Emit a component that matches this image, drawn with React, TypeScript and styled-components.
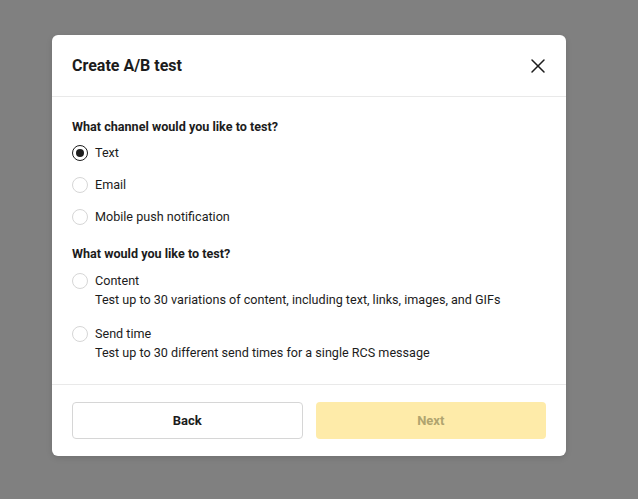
import styled, { createGlobalStyle } from "styled-components";
import { X } from "lucide-react";

const GlobalStyle = createGlobalStyle`
  html, body {
    margin: 0;
    padding: 0;
    background: #808080;
  }
  body {
    font-family: Roboto, "Liberation Sans", Arial, sans-serif;
    color: #1c1c1c;
    -webkit-font-smoothing: antialiased;
  }
`;

const channels = [
  { id: "text", label: "Text" },
  { id: "email", label: "Email" },
  { id: "push", label: "Mobile push notification" },
];

const tests = [
  {
    id: "content",
    label: "Content",
    description: "Test up to 30 variations of content, including text, links, images, and GIFs",
  },
  {
    id: "send",
    label: "Send time",
    description: "Test up to 30 different send times for a single RCS message",
  },
];

function App() {
  return (
    <>
      <GlobalStyle />
      <Overlay>
        <Modal>
          <Header>
            <Title>Create A/B test</Title>
            <CloseButton aria-label="Close">
              <X size={24} strokeWidth={1.5} color="#1c1c1c" />
            </CloseButton>
          </Header>
          <Body>
            <Heading>What channel would you like to test?</Heading>
            {channels.map((c) => (
              <RadioRow key={c.id}>
                <Radio $checked={c.id === "text"} />
                <Label>{c.label}</Label>
              </RadioRow>
            ))}
            <Heading $spaced>What would you like to test?</Heading>
            {tests.map((t) => (
              <OptionBlock key={t.id}>
                <OptionTop>
                  <Radio />
                  <Label>{t.label}</Label>
                </OptionTop>
                <Description>{t.description}</Description>
              </OptionBlock>
            ))}
          </Body>
          <Footer>
            <BackButton>Back</BackButton>
            <NextButton disabled>Next</NextButton>
          </Footer>
        </Modal>
      </Overlay>
    </>
  );
}

const Overlay = styled.div`
  height: 499px;
  padding: 35px 0 0 52px;
  box-sizing: border-box;
`;

const Modal = styled.div`
  width: 514px;
  background: #ffffff;
  border-radius: 6px;
  box-shadow: 0 2px 6px rgba(0, 0, 0, 0.12);
  overflow: hidden;
`;

const Header = styled.div`
  display: flex;
  align-items: center;
  justify-content: space-between;
  height: 61px;
  padding: 0 16px 0 20px;
  border-bottom: 1px solid #e9e9e9;
`;

const Title = styled.h2`
  margin: 0;
  font-size: 16px;
  font-weight: 700;
`;

const CloseButton = styled.button`
  display: flex;
  align-items: center;
  justify-content: center;
  width: 24px;
  height: 24px;
  padding: 0;
  border: none;
  background: none;
  cursor: pointer;
`;

const Body = styled.div`
  padding: 20px 20px 14px;
`;

const Heading = styled.h3<{ $spaced?: boolean }>`
  margin: ${(p) => (p.$spaced ? "11px" : "0")} 0 0;
  font-size: 12.6px;
  line-height: 20px;
  font-weight: 700;
`;

const RadioRow = styled.div`
  display: flex;
  align-items: center;
  gap: 7px;
  height: 32px;
`;

const Radio = styled.span<{ $checked?: boolean }>`
  position: relative;
  flex: none;
  width: 16px;
  height: 16px;
  box-sizing: border-box;
  border-radius: 50%;
  border: ${(p) => (p.$checked ? "1.5px solid #1c1c1c" : "1px solid #d6d6d6")};
  background: #fff;

  &::after {
    content: "";
    display: ${(p) => (p.$checked ? "block" : "none")};
    position: absolute;
    top: 50%;
    left: 50%;
    width: 8px;
    height: 8px;
    margin: -4px 0 0 -4px;
    border-radius: 50%;
    background: #1c1c1c;
  }
`;

const Label = styled.span`
  font-size: 12.6px;
  line-height: 18px;
`;

const OptionBlock = styled.div`
  padding: 8px 0;
`;

const OptionTop = styled.div`
  display: flex;
  align-items: center;
  gap: 7px;
`;

const Description = styled.div`
  margin: 1px 0 0 23px;
  font-size: 12.6px;
  line-height: 18px;
`;

const Footer = styled.div`
  display: grid;
  grid-template-columns: 1fr 1fr;
  gap: 13px;
  padding: 17px 20px;
  border-top: 1px solid #e9e9e9;
`;

const ButtonBase = styled.button`
  height: 37px;
  border-radius: 4px;
  font-family: inherit;
  font-size: 13px;
  font-weight: 700;
`;

const BackButton = styled(ButtonBase)`
  background: #fff;
  border: 1px solid #d6d6d6;
  color: #1c1c1c;
  cursor: pointer;
`;

const NextButton = styled(ButtonBase)`
  background: #feeba9;
  border: none;
  color: #b0a46f;
`;

export default App;
